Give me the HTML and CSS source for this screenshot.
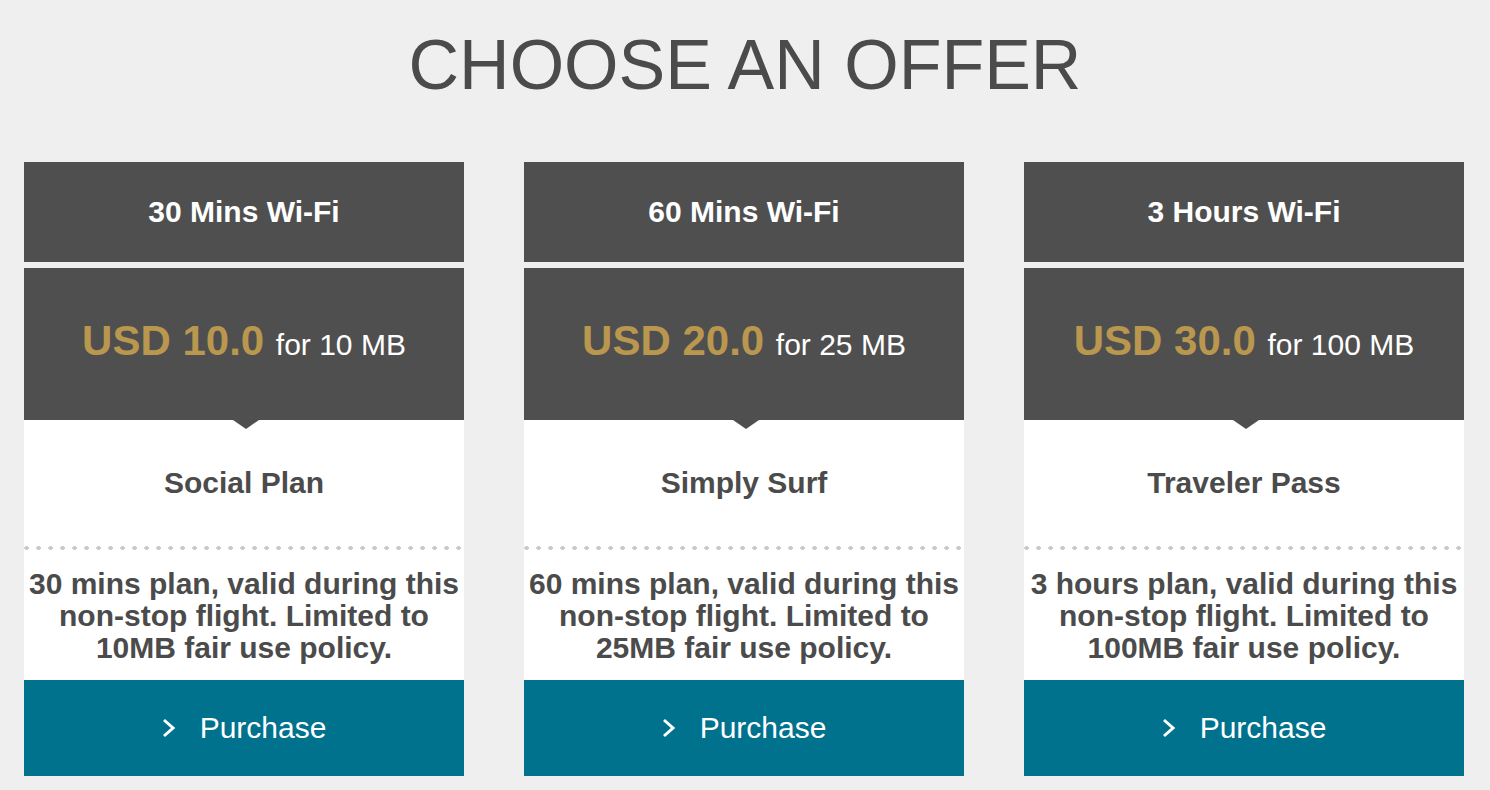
FILE: index.html
```html
<!DOCTYPE html>
<html lang="en">
<head>
<meta charset="utf-8">
<title>Choose an offer</title>
<link rel="stylesheet" href="styles.css">
</head>
<body>
<h1 class="title">CHOOSE AN OFFER</h1>
<div class="offers">
  <div class="card">
    <div class="card-head">30 Mins Wi-Fi</div>
    <div class="card-price"><span class="amount">USD 10.0</span> <span class="volume">for 10 MB</span></div>
    <div class="card-body">
      <div class="plan">Social Plan</div>
      <div class="dots"></div>
      <div class="desc">30 mins plan, valid during this non-stop flight. Limited to 10MB fair use policy.</div>
    </div>
    <div class="buy"><svg class="chev" width="14" height="20" viewBox="0 0 14 20"><path d="M2 2 L11 10 L2 18" fill="none" stroke="#fff" stroke-width="3"/></svg><span>Purchase</span></div>
  </div>
  <div class="card">
    <div class="card-head">60 Mins Wi-Fi</div>
    <div class="card-price"><span class="amount">USD 20.0</span> <span class="volume">for 25 MB</span></div>
    <div class="card-body">
      <div class="plan">Simply Surf</div>
      <div class="dots"></div>
      <div class="desc">60 mins plan, valid during this non-stop flight. Limited to 25MB fair use policy.</div>
    </div>
    <div class="buy"><svg class="chev" width="14" height="20" viewBox="0 0 14 20"><path d="M2 2 L11 10 L2 18" fill="none" stroke="#fff" stroke-width="3"/></svg><span>Purchase</span></div>
  </div>
  <div class="card">
    <div class="card-head">3 Hours Wi-Fi</div>
    <div class="card-price"><span class="amount">USD 30.0</span> <span class="volume">for 100 MB</span></div>
    <div class="card-body">
      <div class="plan">Traveler Pass</div>
      <div class="dots"></div>
      <div class="desc">3 hours plan, valid during this non-stop flight. Limited to 100MB fair use policy.</div>
    </div>
    <div class="buy"><svg class="chev" width="14" height="20" viewBox="0 0 14 20"><path d="M2 2 L11 10 L2 18" fill="none" stroke="#fff" stroke-width="3"/></svg><span>Purchase</span></div>
  </div>
</div>
</body>
</html>
```
FILE: styles.css
```css
* { box-sizing: border-box; }
html, body {
  margin: 0;
  padding: 0;
  background: #efefef;
  font-family: "Liberation Sans", Arial, Helvetica, sans-serif;
  color: #4b4b4b;
}
.title {
  margin: 0;
  padding-top: 25px;
  font-size: 70px;
  line-height: 80px;
  font-weight: normal;
  text-align: center;
  color: #4b4b4b;
}
.offers {
  display: flex;
  gap: 60px;
  padding: 57px 24px 0;
}
.card {
  width: 440px;
  display: flex;
  flex-direction: column;
}
.card-head {
  height: 100px;
  background: #4f4f4f;
  color: #fff;
  font-size: 30px;
  font-weight: bold;
  display: flex;
  align-items: center;
  justify-content: center;
  margin-bottom: 6px;
}
.card-price {
  position: relative;
  height: 152px;
  background: #4f4f4f;
  text-align: center;
  padding-top: 49px;
  font-size: 42px;
  line-height: 48px;
}
.card-price::after {
  content: "";
  position: absolute;
  left: 50%;
  margin-left: -11px;
  top: 152px;
  border-left: 13.5px solid transparent;
  border-right: 13.5px solid transparent;
  border-top: 9px solid #4f4f4f;
}
.amount {
  color: #b9974f;
  font-weight: bold;
}
.volume {
  color: #fff;
  font-size: 30px;
}
.card-body {
  background: #fff;
}
.plan {
  height: 126px;
  display: flex;
  align-items: center;
  justify-content: center;
  font-size: 30px;
  font-weight: bold;
  color: #4b4b4b;
}
.dots {
  height: 4px;
  background-image: radial-gradient(ellipse 2.6px 2px at 2.6px 2px, #c9c9c9 80%, rgba(201,201,201,0) 100%);
  background-size: 12px 4px;
  background-repeat: repeat-x;
  background-position: 0 0;
}
.desc {
  padding: 18px 4px 16px;
  font-size: 30px;
  line-height: 32px;
  font-weight: bold;
  text-align: center;
  color: #4b4b4b;
}
.buy {
  height: 96px;
  background: #00728e;
  color: #fff;
  font-size: 30px;
  display: flex;
  align-items: center;
  justify-content: center;
  gap: 24px;
}
.chev {
  display: block;
  flex: none;
}
```
